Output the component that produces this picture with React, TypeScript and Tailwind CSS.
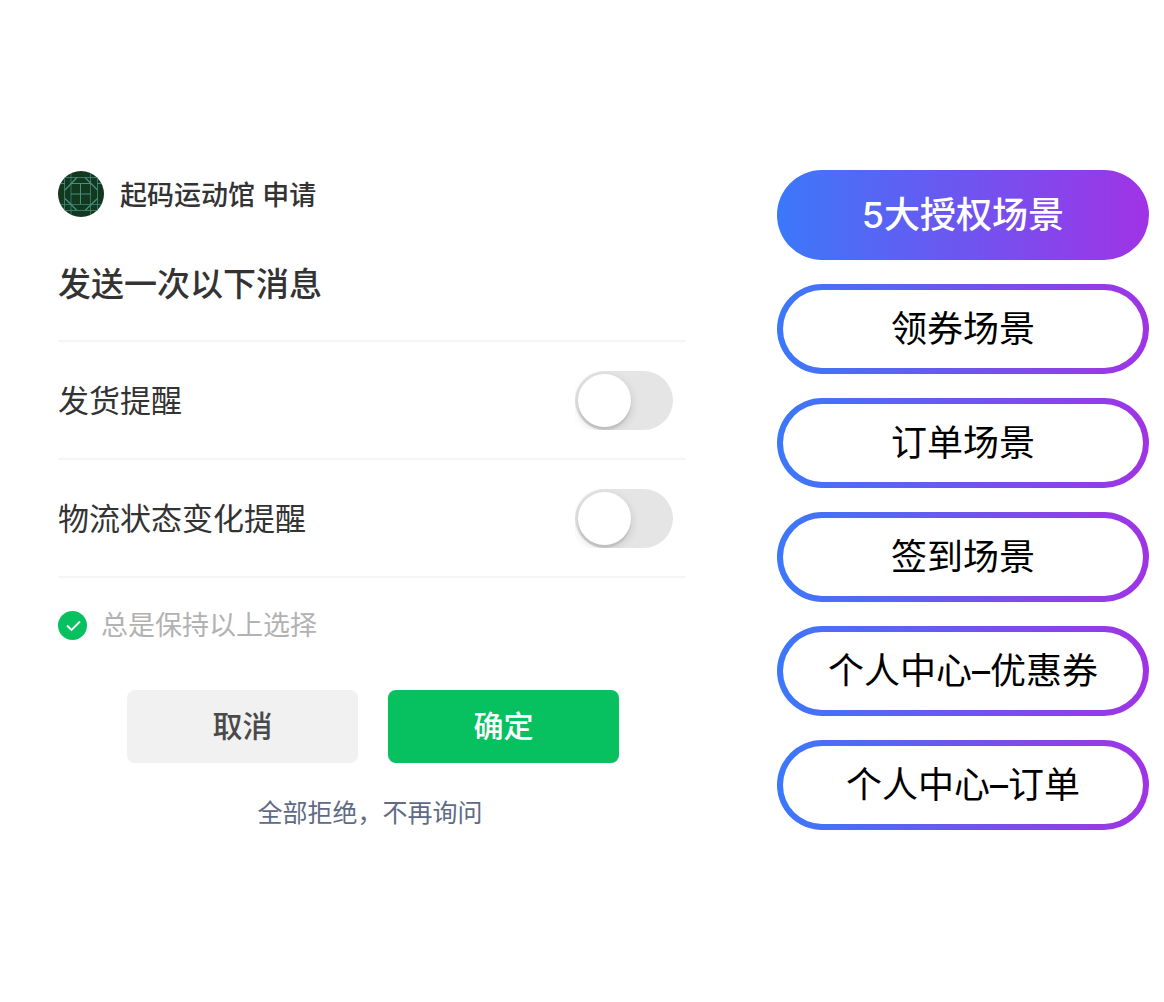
import { useState } from "react";

const reminders = ["发货提醒", "物流状态变化提醒"];

const scenes = [
  "5大授权场景",
  "领券场景",
  "订单场景",
  "签到场景",
  "个人中心–优惠券",
  "个人中心–订单",
];

function Avatar() {
  return (
    <svg className="size-[46px] shrink-0" viewBox="0 0 46 46" aria-hidden="true">
      <defs>
        <clipPath id="avatar-round">
          <circle cx="23" cy="23" r="23" />
        </clipPath>
      </defs>
      <g clipPath="url(#avatar-round)" fill="none" stroke="#458f80" strokeWidth="1">
        <rect width="46" height="46" fill="#12381f" stroke="none" />
        <path d="M6.5 0V46M39.5 0V46M0 6.5H46M0 39.5H46" opacity=".75" />
        <path d="M13 0V46M32.5 0V46M0 33.5H46" opacity=".7" />
        <path d="M13 12.5H33M0 12.5H7M39 12.5H46M22.5 12.5V33M13 23H33" />
        <path d="M7 19L19 6.5M27 6.5L39.5 19M7 27.5L19 39.5M27 39.5L39.5 27.5" strokeWidth="1.3" />
      </g>
    </svg>
  );
}

function ReminderRow({ label }: { label: string }) {
  return (
    <li className="border-b-2 border-[#f5f5f5]">
      <label className="flex h-[116px] items-center justify-between pt-px pr-[13px] text-[31px] text-[#333]">
        <span className="pt-0.5">{label}</span>
        <span className="flex overflow-hidden">
          <input
            type="checkbox"
            role="switch"
            className="flex h-[59px] w-[98px] appearance-none items-center rounded-full bg-[#e5e5e5] pl-[3px] before:size-[53px] before:rounded-full before:bg-white before:shadow-[0_3px_10px_rgba(0,0,0,0.15),0_3px_1px_rgba(0,0,0,0.08)] before:content-[''] checked:bg-[#07c160] checked:before:ml-[39px]"
          />
        </span>
      </label>
    </li>
  );
}

export default function App() {
  const [active, setActive] = useState(0);
  const [keep, setKeep] = useState(true);

  return (
    <main className="flex min-h-screen items-start bg-white py-[170px] pr-[15px] pl-[58px] font-['Inter','Noto_Sans_CJK_SC',sans-serif]">
      <section className="mr-[91px] min-w-0 flex-1">
        <header className="flex h-12 items-center gap-4">
          <Avatar />
          <p className="pt-1 text-[27px] leading-10 font-medium text-[#333]">起码运动馆 申请</p>
        </header>
        <h1 className="mt-[42px] text-[33px] leading-[48px] font-medium text-[#333]">发送一次以下消息</h1>
        <ul className="mt-8 border-t-2 border-[#f5f5f5]">
          {reminders.map((label) => (
            <ReminderRow key={label} label={label} />
          ))}
        </ul>
        <label className="mt-[27px] flex h-10 items-center gap-[14px] text-[27px] text-[#b2b2b2]">
          <span className="grid size-[29px] place-items-center">
            <input
              type="checkbox"
              checked={keep}
              onChange={() => setKeep(!keep)}
              className="col-start-1 row-start-1 size-[29px] appearance-none rounded-full bg-[#ccc] checked:bg-[#07c160]"
            />
            <svg
              className="pointer-events-none col-start-1 row-start-1 size-[29px]"
              viewBox="0 0 29 29"
              fill="none"
              stroke="#fff"
              strokeWidth="1.9"
              aria-hidden="true"
            >
              <path d="M9 14.5L13.5 19L22 10.5" />
            </svg>
          </span>
          <span className="pt-0.5">总是保持以上选择</span>
        </label>
        <div className="mt-[45px] flex justify-center gap-[30px] pl-0.5 text-[30px] font-medium">
          <button type="button" className="h-[73px] w-[231px] rounded-lg bg-[#f1f1f1] text-[#4a4a4a]">
            取消
          </button>
          <button type="button" className="h-[73px] w-[231px] rounded-lg bg-[#07c160] text-white">
            确定
          </button>
        </div>
        <div className="mt-8 flex justify-center pr-1">
          <button type="button" className="text-[25px] leading-9 text-[#5f6b85]">
            全部拒绝，不再询问
          </button>
        </div>
      </section>
      <nav className="flex w-[372px] shrink-0 flex-col gap-6" aria-label="授权场景">
        {scenes.map((scene, i) => (
          <button
            key={scene}
            type="button"
            onClick={() => setActive(i)}
            className="flex h-[90px] rounded-full bg-linear-to-r/srgb from-[#3b78fa] to-[#a033e5] p-[6px] text-[36px]"
          >
            <span
              className={
                i === active
                  ? "flex flex-1 items-center justify-center self-stretch font-medium text-white"
                  : "flex flex-1 items-center justify-center self-stretch rounded-full bg-white text-black"
              }
            >
              {scene}
            </span>
          </button>
        ))}
      </nav>
    </main>
  );
}
